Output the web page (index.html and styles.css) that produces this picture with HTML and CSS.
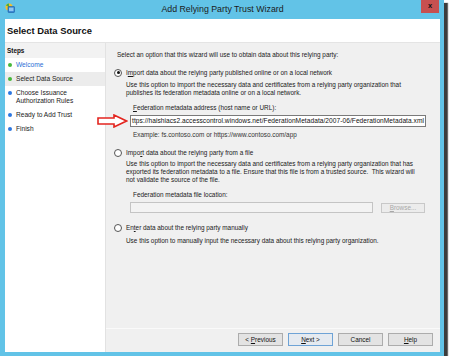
FILE: index.html
```html
<!DOCTYPE html>
<html>
<head>
<meta charset="utf-8">
<link rel="stylesheet" href="styles.css">
</head>
<body>
<div class="window">
  <div class="titlebar">
    <div class="tb-left">
      <svg class="app-icon" width="10" height="11" viewBox="0 0 10 11">
        <circle cx="4" cy="4" r="3.6" fill="#f2c12e"/>
        <path d="M1 2.5 A3.6 3.6 0 0 1 4 0.4 L4 4 Z" fill="#4caf3c"/>
        <rect x="3" y="3.5" width="6.5" height="6" rx="0.8" fill="#2f7fd0" stroke="#1d5ea6" stroke-width="0.6"/>
        <rect x="4" y="4.6" width="4.5" height="3.6" fill="#8fc6f2"/>
      </svg>
    </div>
    <div class="title">Add Relying Party Trust Wizard</div>
    <div class="tb-right"><div class="close">x</div></div>
  </div>
  <div class="client">
    <div class="header">Select Data Source</div>
    <div class="body">
      <div class="steps">
        <div class="steps-head">Steps</div>
        <ul class="step-list">
          <li class="step"><span class="dot green"></span><span class="link">Welcome</span></li>
          <li class="step current"><span class="dot green"></span><span>Select Data Source</span></li>
          <li class="step"><span class="dot blue"></span><span>Choose Issuance<br>Authorization Rules</span></li>
          <li class="step"><span class="dot blue"></span><span>Ready to Add Trust</span></li>
          <li class="step"><span class="dot blue"></span><span>Finish</span></li>
        </ul>
      </div>
      <div class="main">
        <div class="content">
          <p class="intro">Select an option that this wizard will use to obtain data about this relying party:</p>

          <div class="option opt1">
            <span class="radio checked"></span>
            <span>I<u>m</u>port data about the relying party published online or on a local network</span>
          </div>
          <p class="desc">Use this option to import the necessary data and certificates from a relying party organization that<br>publishes its federation metadata online or on a local network.</p>
          <p class="field-label lbl1"><u>F</u>ederation metadata address (host name or URL):</p>
          <div class="url-row">
            <svg class="arrow" width="31" height="14" viewBox="0 0 31 14">
              <polygon points="1,4 17,4 17,1 29.5,7 17,13 17,10 1,10" fill="#ffffff" stroke="#e3251f" stroke-width="1.6" stroke-linejoin="miter"/>
            </svg>
            <div class="textbox active"><span class="url">ttps://haishiacs2.accesscontrol.windows.net/FederationMetadata/2007-06/FederationMetadata.xml</span><span class="caret"></span></div>
          </div>
          <p class="example">Example: fs.contoso.com or https://www.contoso.com/app</p>

          <div class="option opt2">
            <span class="radio"></span>
            <span>Impo<u>r</u>t data about the relying party from a file</span>
          </div>
          <p class="desc desc2">Use this option to import the necessary data and certificates from a relying party organization that has<br>exported its federation metadata to a file. Ensure that this file is from a trusted source.&nbsp; This wizard will<br>not validate the source of the file.</p>
          <p class="field-label lbl2">Federation metadata file location:</p>
          <div class="file-row">
            <div class="textbox disabled"></div>
            <div class="btn disabled-btn"><u>B</u>rowse...</div>
          </div>

          <div class="option opt3">
            <span class="radio"></span>
            <span>En<u>t</u>er data about the relying party manually</span>
          </div>
          <p class="desc desc3">Use this option to manually input the necessary data about this relying party organization.</p>
        </div>
        <div class="buttons">
          <div class="btn">&lt; <u>P</u>revious</div>
          <div class="btn default"><u>N</u>ext &gt;</div>
          <div class="btn">Cancel</div>
          <div class="btn"><u>H</u>elp</div>
        </div>
      </div>
    </div>
  </div>
</div>
</body>
</html>
```

FILE: styles.css
```css
* { box-sizing: border-box; }
html, body { margin: 0; padding: 0; background: #ffffff; }
body {
  font-family: "Liberation Sans", Arial, sans-serif;
  font-size: 6.4px;
  line-height: 8px;
  color: #1a1a1a;
}
p { margin: 0; }
u { text-decoration: underline; text-underline-offset: 1px; }

.window {
  width: 444px;
  height: 356px;
  background: #62c3e7;
  padding: 0 4px 4px 5px;
  display: flex;
  flex-direction: column;
  box-shadow: 3px 3px 0 #3c3c3c, 4px 3px 1px #6a6a6a;
}

.titlebar {
  height: 19px;
  display: flex;
  align-items: flex-start;
}
.tb-left { width: 30px; flex: none; padding-top: 3px; }
.app-icon { display: block; }
.title {
  flex: 1;
  text-align: center;
  font-size: 8.8px;
  line-height: 19px;
  color: #1b1b1b;
  white-space: nowrap;
}
.tb-right { width: 30px; flex: none; display: flex; justify-content: flex-end; }
.close {
  flex: none;
  display: block;
  width: 18px;
  height: 13px;
  background-color: #c75050;
  color: #111;
  font-weight: bold;
  font-size: 7.5px;
  line-height: 12px;
  text-align: center;
  margin-right: 1px;
}

.client {
  flex: 1;
  display: flex;
  flex-direction: column;
  background: #f0f0f0;
}
.header {
  height: 24px;
  background: #ffffff;
  font-weight: bold;
  font-size: 9.4px;
  line-height: 24px;
  padding-left: 2px;
  color: #111;
  border-bottom: 1px solid #e4e4e4;
}
.body {
  flex: 1;
  display: flex;
}

.steps {
  width: 101px;
  background: #ffffff;
  border-right: 1px solid #e2e2e2;
}
.steps-head {
  background: #f2f2f2;
  font-weight: bold;
  padding: 4px 0 2px 2px;
  height: 15px;
  line-height: 8px;
  color: #111;
}
.step-list {
  list-style: none;
  margin: 0;
  padding: 0;
}
.step {
  display: flex;
  align-items: flex-start;
  padding: 3px 0 3px 3px;
  line-height: 8px;
  font-size: 6.6px;
  color: #222;
}
.step.current { background: #ececec; }
.dot {
  width: 4px;
  height: 4px;
  border-radius: 50%;
  margin: 2px 4px 0 0;
  flex: none;
}
.dot.green { background: #46b83a; }
.dot.blue { background: #2d77e0; }
.link { color: #2b6fd6; }

.main {
  flex: 1;
  display: flex;
  flex-direction: column;
}
.content {
  flex: 1;
  padding: 8px 0 0 8px;
}
.intro { margin-left: 3px; }

.option {
  display: flex;
  align-items: center;
  gap: 4px;
  height: 9px;
  line-height: 9px;
}
.opt1 { margin-top: 9px; }
.opt2 { margin-top: 9px; }
.opt3 { margin-top: 10px; }

.radio {
  width: 8px;
  height: 8px;
  border-radius: 50%;
  border: 1px solid #555;
  background: #fff;
  flex: none;
  position: relative;
}
.radio.checked::after {
  content: "";
  position: absolute;
  left: 1.5px;
  top: 1.5px;
  width: 3px;
  height: 3px;
  border-radius: 50%;
  background: #111;
}

.desc { margin: 4px 0 0 12px; }
.desc2 { margin-top: 3px; }
.desc3 { margin-top: 5px; }

.field-label { margin: 7px 0 0 19px; }
.url-row {
  position: relative;
  margin: 3px 0 0 16px;
}
.arrow {
  position: absolute;
  left: -33px;
  top: -1px;
}
.textbox {
  height: 12px;
  background: #fff;
  border: 1px solid #7a7a7a;
  overflow: hidden;
  white-space: nowrap;
  display: flex;
  align-items: center;
  padding-left: 1px;
}
.textbox.active { width: 296px; }
.url { font-size: 6.6px; color: #111; letter-spacing: 0.05px; }
.caret {
  width: 1px;
  height: 9px;
  background: #000;
  margin-left: 1px;
}
.example { margin: 4px 0 0 19px; color: #333; }

.file-row {
  display: flex;
  align-items: flex-end;
  gap: 8px;
  margin: 3px 0 0 16px;
}
.textbox.disabled {
  width: 243px;
  height: 11px;
  background: #f3f3f3;
  border-color: #c4c4c4;
}

.btn {
  width: 45px;
  height: 13px;
  border: 1px solid #acacac;
  background: #e3e3e3;
  text-align: center;
  line-height: 11px;
  color: #111;
}
.btn.default { border-color: #6ea3d6; background: #e5eaf0; }
.disabled-btn {
  width: 44px;
  height: 10px;
  line-height: 8px;
  color: #a8a8a8;
  border-color: #c8c8c8;
  background: #ececec;
}

.buttons {
  height: 24px;
  border-top: 1px solid #fafafa;
  display: flex;
  justify-content: flex-end;
  gap: 5px;
  padding: 4px 7px 0 0;
}
```
